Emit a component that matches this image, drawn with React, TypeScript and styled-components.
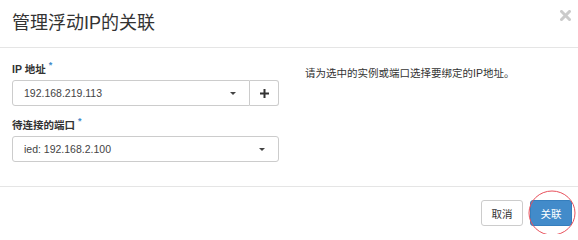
import React from "react";
import styled, { createGlobalStyle } from "styled-components";

const GlobalStyle = createGlobalStyle`
  html, body {
    margin: 0;
    padding: 0;
    background: #fff;
  }
  body {
    font-family: "Liberation Sans", "Noto Sans CJK SC", sans-serif;
    color: #333;
  }
`;

const Modal = styled.div`
  width: 578px;
  height: 234px;
  background: #fff;
  overflow: hidden;
`;

const Header = styled.div`
  display: flex;
  justify-content: space-between;
  align-items: flex-start;
  padding: 13px 7px 14px 12px;
  border-bottom: 1px solid #e5e5e5;
`;

const Title = styled.h4`
  margin: 0;
  font-size: 18px;
  line-height: 20px;
  font-weight: normal;
  color: #333;
`;

const Close = styled.button`
  display: flex;
  border: 0;
  background: none;
  padding: 0;
  margin-top: -3px;
  opacity: 0.2;
  cursor: pointer;
`;

const Body = styled.div`
  display: grid;
  grid-template-columns: 267px 1fr;
  column-gap: 26px;
  padding: 14px 12px 24px;
`;

const FormGroup = styled.div`
  margin-bottom: 12px;
  &:last-child {
    margin-bottom: 0;
  }
`;

const Label = styled.label`
  display: block;
  font-size: 10.5px;
  line-height: 15px;
  font-weight: bold;
  color: #333;
  margin-bottom: 3px;
`;

const Required = styled.span`
  color: #428bca;
  font-size: 9px;
  vertical-align: top;
  position: relative;
  top: -4px;
  margin-left: 3px;
`;

const InputGroup = styled.div`
  display: flex;
  height: 26px;
`;

const Select = styled.div<{ $attached?: boolean }>`
  flex: 1;
  display: flex;
  align-items: center;
  justify-content: space-between;
  box-sizing: border-box;
  height: 26px;
  padding: 0 13px 0 11px;
  border: 1px solid #ccc;
  border-radius: ${({ $attached }) => ($attached ? "3px 0 0 3px" : "3px")};
  font-size: 10.5px;
  color: #444;
  background: #fff;
`;

const Caret = styled.span`
  width: 0;
  height: 0;
  border-top: 3px solid #444;
  border-left: 3px solid transparent;
  border-right: 3px solid transparent;
`;

const AddonButton = styled.button`
  width: 29px;
  height: 26px;
  box-sizing: border-box;
  display: flex;
  align-items: center;
  justify-content: center;
  padding: 0;
  border: 1px solid #ccc;
  border-left: 0;
  border-radius: 0 3px 3px 0;
  background: #fff;
  cursor: pointer;
`;

const Help = styled.p`
  margin: 0;
  padding-top: 4px;
  font-size: 10.5px;
  line-height: 15px;
  color: #333;
`;

const Footer = styled.div`
  display: flex;
  justify-content: flex-end;
  gap: 7px;
  padding: 13px 6px 8px;
  border-top: 1px solid #e5e5e5;
`;

const Button = styled.button<{ $primary?: boolean }>`
  position: relative;
  width: 42px;
  height: 26px;
  box-sizing: border-box;
  padding: 0;
  border-radius: 3px;
  border: 1px solid ${({ $primary }) => ($primary ? "#357ebd" : "#ccc")};
  background: ${({ $primary }) => ($primary ? "#428bca" : "#fff")};
  color: ${({ $primary }) => ($primary ? "#fff" : "#333")};
  font-family: "Liberation Sans", "Noto Sans CJK SC", sans-serif;
  font-size: 10.5px;
  cursor: pointer;
`;

const Highlight = styled.svg`
  position: absolute;
  left: -3px;
  top: -11px;
  width: 48px;
  height: 46px;
  pointer-events: none;
  overflow: visible;
`;

const PlusIcon = () => (
  <svg width="9" height="9" viewBox="0 0 9 9">
    <rect x="3.5" y="0" width="2" height="9" fill="#333" />
    <rect x="0" y="3.5" width="9" height="2" fill="#333" />
  </svg>
);

const CloseIcon = () => (
  <svg width="11" height="11" viewBox="0 0 11 11">
    <path d="M1.5 1.5 L9.5 9.5 M9.5 1.5 L1.5 9.5" stroke="#000" strokeWidth="3" strokeLinecap="square" />
  </svg>
);

const App = () => {
  return (
    <>
      <GlobalStyle />
      <Modal>
        <Header>
          <Title>管理浮动IP的关联</Title>
          <Close aria-label="关闭">
            <CloseIcon />
          </Close>
        </Header>
        <Body>
          <div>
            <FormGroup>
              <Label>
                IP 地址<Required>*</Required>
              </Label>
              <InputGroup>
                <Select $attached>
                  <span>192.168.219.113</span>
                  <Caret />
                </Select>
                <AddonButton>
                  <PlusIcon />
                </AddonButton>
              </InputGroup>
            </FormGroup>
            <FormGroup>
              <Label>
                待连接的端口<Required>*</Required>
              </Label>
              <Select>
                <span>ied: 192.168.2.100</span>
                <Caret />
              </Select>
            </FormGroup>
          </div>
          <Help>请为选中的实例或端口选择要绑定的IP地址。</Help>
        </Body>
        <Footer>
          <Button>取消</Button>
          <Button $primary>
            关联
            <Highlight viewBox="0 0 48 46">
              <ellipse cx="24" cy="23" rx="23" ry="22" fill="none" stroke="#e8505b" strokeWidth="1" />
            </Highlight>
          </Button>
        </Footer>
      </Modal>
    </>
  );
};

export default App;
